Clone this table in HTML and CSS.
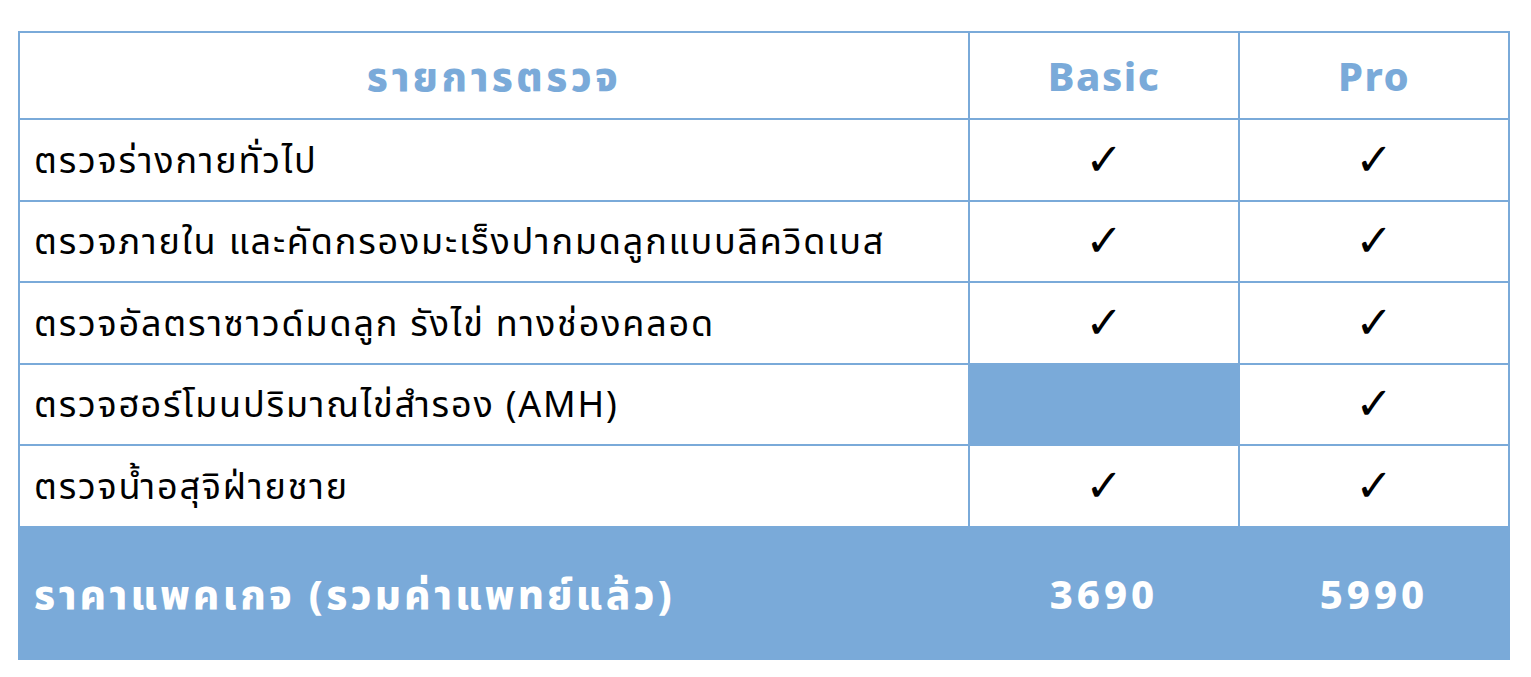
FILE: index.html
```html
<!DOCTYPE html>
<html lang="th">
<head>
<meta charset="utf-8">
<link rel="stylesheet" href="styles.css">
</head>
<body>
<table class="price">
  <colgroup>
    <col class="c-item"><col class="c-plan"><col class="c-plan">
  </colgroup>
  <thead>
    <tr class="head">
      <th class="th-item">รายการตรวจ</th>
      <th>Basic</th>
      <th>Pro</th>
    </tr>
  </thead>
  <tbody>
    <tr class="row">
      <td class="item">ตรวจร่างกายทั่วไป</td>
      <td class="mark">✓</td>
      <td class="mark">✓</td>
    </tr>
    <tr class="row">
      <td class="item">ตรวจภายใน และคัดกรองมะเร็งปากมดลูกแบบลิควิดเบส</td>
      <td class="mark">✓</td>
      <td class="mark">✓</td>
    </tr>
    <tr class="row">
      <td class="item">ตรวจอัลตราซาวด์มดลูก รังไข่ ทางช่องคลอด</td>
      <td class="mark">✓</td>
      <td class="mark">✓</td>
    </tr>
    <tr class="row">
      <td class="item">ตรวจฮอร์โมนปริมาณไข่สำรอง (AMH)</td>
      <td class="mark empty"></td>
      <td class="mark">✓</td>
    </tr>
    <tr class="row">
      <td class="item">ตรวจน้ำอสุจิฝ่ายชาย</td>
      <td class="mark">✓</td>
      <td class="mark">✓</td>
    </tr>
  </tbody>
  <tfoot>
    <tr class="foot">
      <td class="label">ราคาแพคเกจ (รวมค่าแพทย์แล้ว)</td>
      <td class="num">3690</td>
      <td class="num">5990</td>
    </tr>
  </tfoot>
</table>
</body>
</html>
```
FILE: styles.css
```css
html, body {
  margin: 0;
  padding: 0;
  background: #ffffff;
}
body {
  padding: 31px 0 0 18px;
  font-family: "Noto Sans", "Noto Sans Thai", "Liberation Sans", sans-serif;
  color: #000;
}
.price {
  border-collapse: collapse;
  width: 1491px;
  table-layout: fixed;
}
.c-item { width: 950px; }
.c-plan { width: 270px; }
.price th, .price td {
  border: 2px solid #7aaad9;
  padding: 0;
  line-height: 40px;
  overflow: hidden;
  white-space: nowrap;
}
.head th {
  height: 85px;
  color: #7aaad9;
  font-size: 40px;
  font-weight: 800;
  letter-spacing: 1.5px;
  text-align: center;
  vertical-align: middle;
}
.head .th-item {
  letter-spacing: 3.5px;
}
.row td {
  height: 79.5px;
  vertical-align: middle;
}
.item {
  font-size: 36px;
  letter-spacing: 1.8px;
  text-align: left;
  padding-left: 14px !important;
}
.mark {
  text-align: center;
  font-family: "DejaVu Sans", sans-serif;
  font-size: 45px;
}
.mark.empty {
  background: #7aaad9;
}
.foot td {
  background: #7aaad9;
  border-color: #7aaad9;
  color: #ffffff;
  height: 128px;
  font-size: 40px;
  font-weight: 800;
  letter-spacing: 3.4px;
  vertical-align: middle;
  padding-top: 2px;
}
.foot .label {
  padding-left: 14px;
  text-align: left;
}
.foot .num {
  text-align: center;
  letter-spacing: 4px;
}
```
